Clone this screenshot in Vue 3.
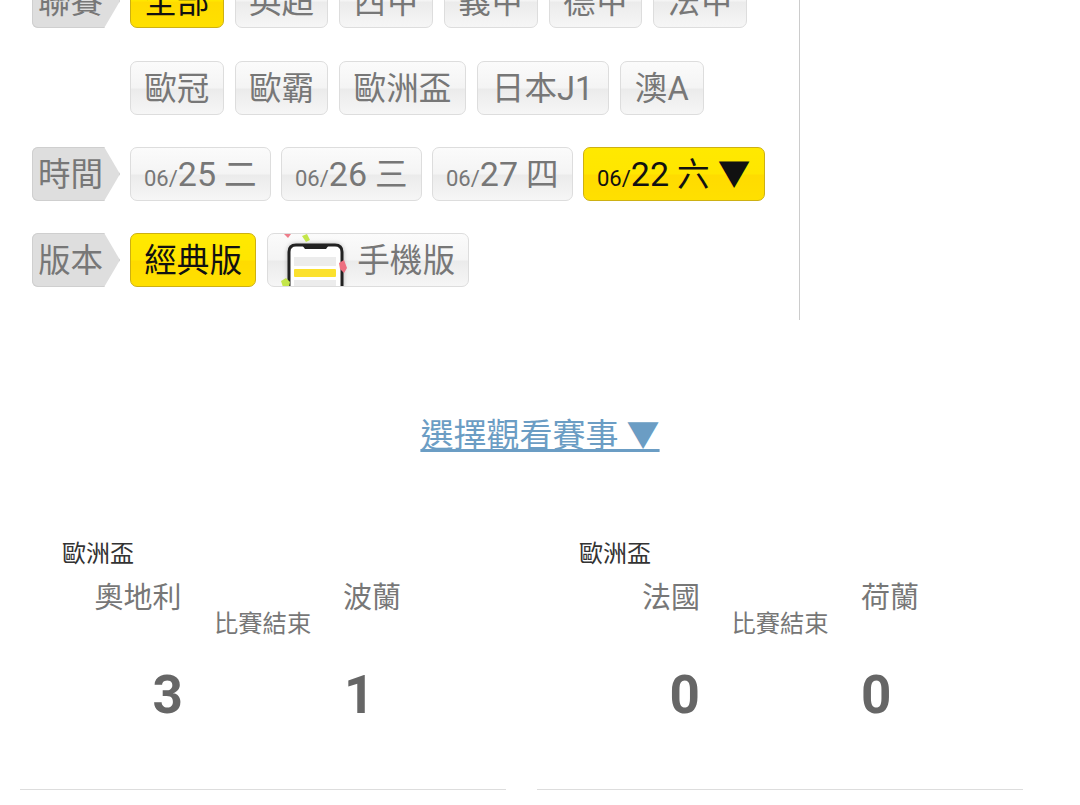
<script setup>
const leagues = [
  { name: '全部', on: true }, { name: '英超' }, { name: '西甲' }, { name: '義甲' }, { name: '德甲' }, { name: '法甲' },
  { name: '歐冠' }, { name: '歐霸' }, { name: '歐洲盃' }, { name: '日本J1', latin: true }, { name: '澳A', latin: true },
]
const days = [
  { d: '25', w: '二' }, { d: '26', w: '三' }, { d: '27', w: '四' }, { d: '22', w: '六 ▼', on: true },
]
const matches = [
  { home: '奧地利', away: '波蘭', hs: 3, as: 1, cls: 'first' },
  { home: '法國', away: '荷蘭', hs: 0, as: 0, cls: 'second' },
]
</script>

<template>
  <div class="page">
    <div class="filters">
      <div class="row">
        <div class="label">聯賽</div>
        <div class="btns">
          <button v-for="l in leagues" :key="l.name" :class="['btn', { on: l.on, latin: l.latin }]">{{ l.name }}</button>
        </div>
      </div>
      <div class="row">
        <div class="label">時間</div>
        <div class="btns days">
          <button v-for="x in days" :key="x.d" :class="['btn', 'day', { on: x.on }]">
            <small>06/</small><b>{{ x.d }}</b> {{ x.w }}
          </button>
        </div>
      </div>
      <div class="row">
        <div class="label">版本</div>
        <div class="btns">
          <button class="btn on">經典版</button>
          <button class="btn mobile">
            <svg width="70" height="54" viewBox="0 0 70 54">
              <path class="phone" d="M7 54V19q0-7 7-7h39q7 0 7 7v35" fill="#fff" stroke="#222" stroke-width="3" />
              <path d="M20 12h27l-3 4H23z" fill="#222" />
              <rect x="12" y="24" width="42" height="9" fill="#ececec" />
              <rect x="12" y="36" width="42" height="8" rx="1" fill="#fbe12e" />
              <rect x="12" y="47" width="42" height="7" fill="#ececec" />
              <path d="M2 1h7l-3 4z" fill="#ee7d8a" />
              <path d="M20 3l5-2 3 6-4 2z" fill="#c4e64a" />
              <path d="M57 30l5-3 3 8-3 5-4-4z" fill="#ee6f80" />
              <path d="M-1 48l5-3 4 4-1 5h-6z" fill="#c4e64a" />
            </svg>
            <span>手機版</span>
          </button>
        </div>
      </div>
    </div>

    <div class="pick"><a href="#">選擇觀看賽事 ▼</a></div>

    <div class="matches">
      <div v-for="m in matches" :key="m.home" :class="['match', m.cls]">
        <div class="league">歐洲盃</div>
        <div class="teams">
          <span>{{ m.home }}</span>
          <span class="status">比賽結束</span>
          <span>{{ m.away }}</span>
        </div>
        <div class="scores">
          <span>{{ m.hs }}</span>
          <span>{{ m.as }}</span>
        </div>
      </div>
    </div>
  </div>
</template>

<style scoped>
.page {
  height: 805px;
  overflow: hidden;
  font-family: Roboto, "Noto Sans CJK TC", "Noto Sans", sans-serif;
  color: #777;
}

.filters {
  width: 767px;
  margin-top: -26px;
  padding: 0 0 33px 32px;
  border-right: 1px solid #ccc;
  display: flex;
  flex-direction: column;
  gap: 32px;
}

.row {
  display: flex;
  gap: 10px;
}

.label {
  flex: none;
  width: 88px;
  height: 54px;
  padding-left: 6px;
  box-sizing: border-box;
  background: #dedede;
  border-radius: 6px 0 0 6px;
  box-shadow: inset 0 0 0 1px #cfcfcf;
  clip-path: polygon(0 0, 82% 0, 100% 50%, 82% 100%, 0 100%);
  font-size: 32.6px;
  line-height: 57px;
  color: #777;
}

.btns {
  display: flex;
  flex-wrap: wrap;
  gap: 33px 11px;
  width: 640px;
}

.btns.days {
  column-gap: 10px;
}

.btn {
  height: 54px;
  box-sizing: border-box;
  padding: 0 13.25px 6px;
  border: 1px solid #ddd;
  border-radius: 7px;
  background: linear-gradient(#fbfbfb 0%, #f4f4f4 50%, #ebebeb 52%, #f6f6f6 100%);
  color: #777;
  font-family: inherit;
  font-size: 32.6px;
  white-space: nowrap;
}

.btn.latin {
  padding: 0 14.25px 6px;
}

.btn.on {
  border-color: #cdb013;
  background: linear-gradient(#ffe900 0%, #ffe600 50%, #ffdb00 52%, #ffe000 100%);
  color: #111;
}

.day {
  width: 141px;
  padding: 0 13px 5px;
  text-align: left;
}

.day.on {
  width: 182px;
}

.day small {
  font-size: 22px;
}

.day b {
  font-weight: 400;
  font-size: 34px;
}

.mobile {
  display: flex;
  align-items: center;
  gap: 5px;
  width: 202px;
  padding: 0 0 0 14px;
  overflow: hidden;
}

.mobile svg {
  flex: none;
  overflow: visible;
}

.mobile span {
  margin-bottom: 6px;
}

.phone {
  filter: drop-shadow(0 0 2px rgba(0, 0, 0, .25));
}

.pick {
  margin-top: 92px;
  text-align: center;
  font-size: 33px;
  line-height: 48px;
}

.pick a {
  color: #6b9dc4;
  text-decoration: underline;
}

.matches {
  display: flex;
  gap: 31px;
  margin: 76px 0 0 20px;
}

.match {
  width: 486px;
  height: 254px;
  box-sizing: border-box;
  border-bottom: 1px solid #ddd;
}

.league {
  padding-left: 42px;
  font-size: 24px;
  line-height: 36px;
  color: #333;
}

.teams {
  display: grid;
  align-items: start;
  text-align: center;
  height: 64px;
  margin-top: 6px;
  font-size: 29px;
  line-height: 40px;
}

.first .teams {
  grid-template-columns: 152px 97px 122px;
  padding-left: 42px;
}

.second .teams {
  grid-template-columns: 120px 98px 122px;
  padding-left: 74px;
}

.status {
  margin-top: 29px;
  font-size: 24.3px;
  line-height: 34px;
  white-space: nowrap;
}

.scores {
  display: flex;
  justify-content: center;
  gap: 161px;
  margin: 23px 0 0 1px;
  font-size: 53px;
  font-weight: 700;
  line-height: 60px;
  color: #666;
}
</style>

<style>
html, body {
  background: #fff;
  overflow: hidden;
}
</style>
